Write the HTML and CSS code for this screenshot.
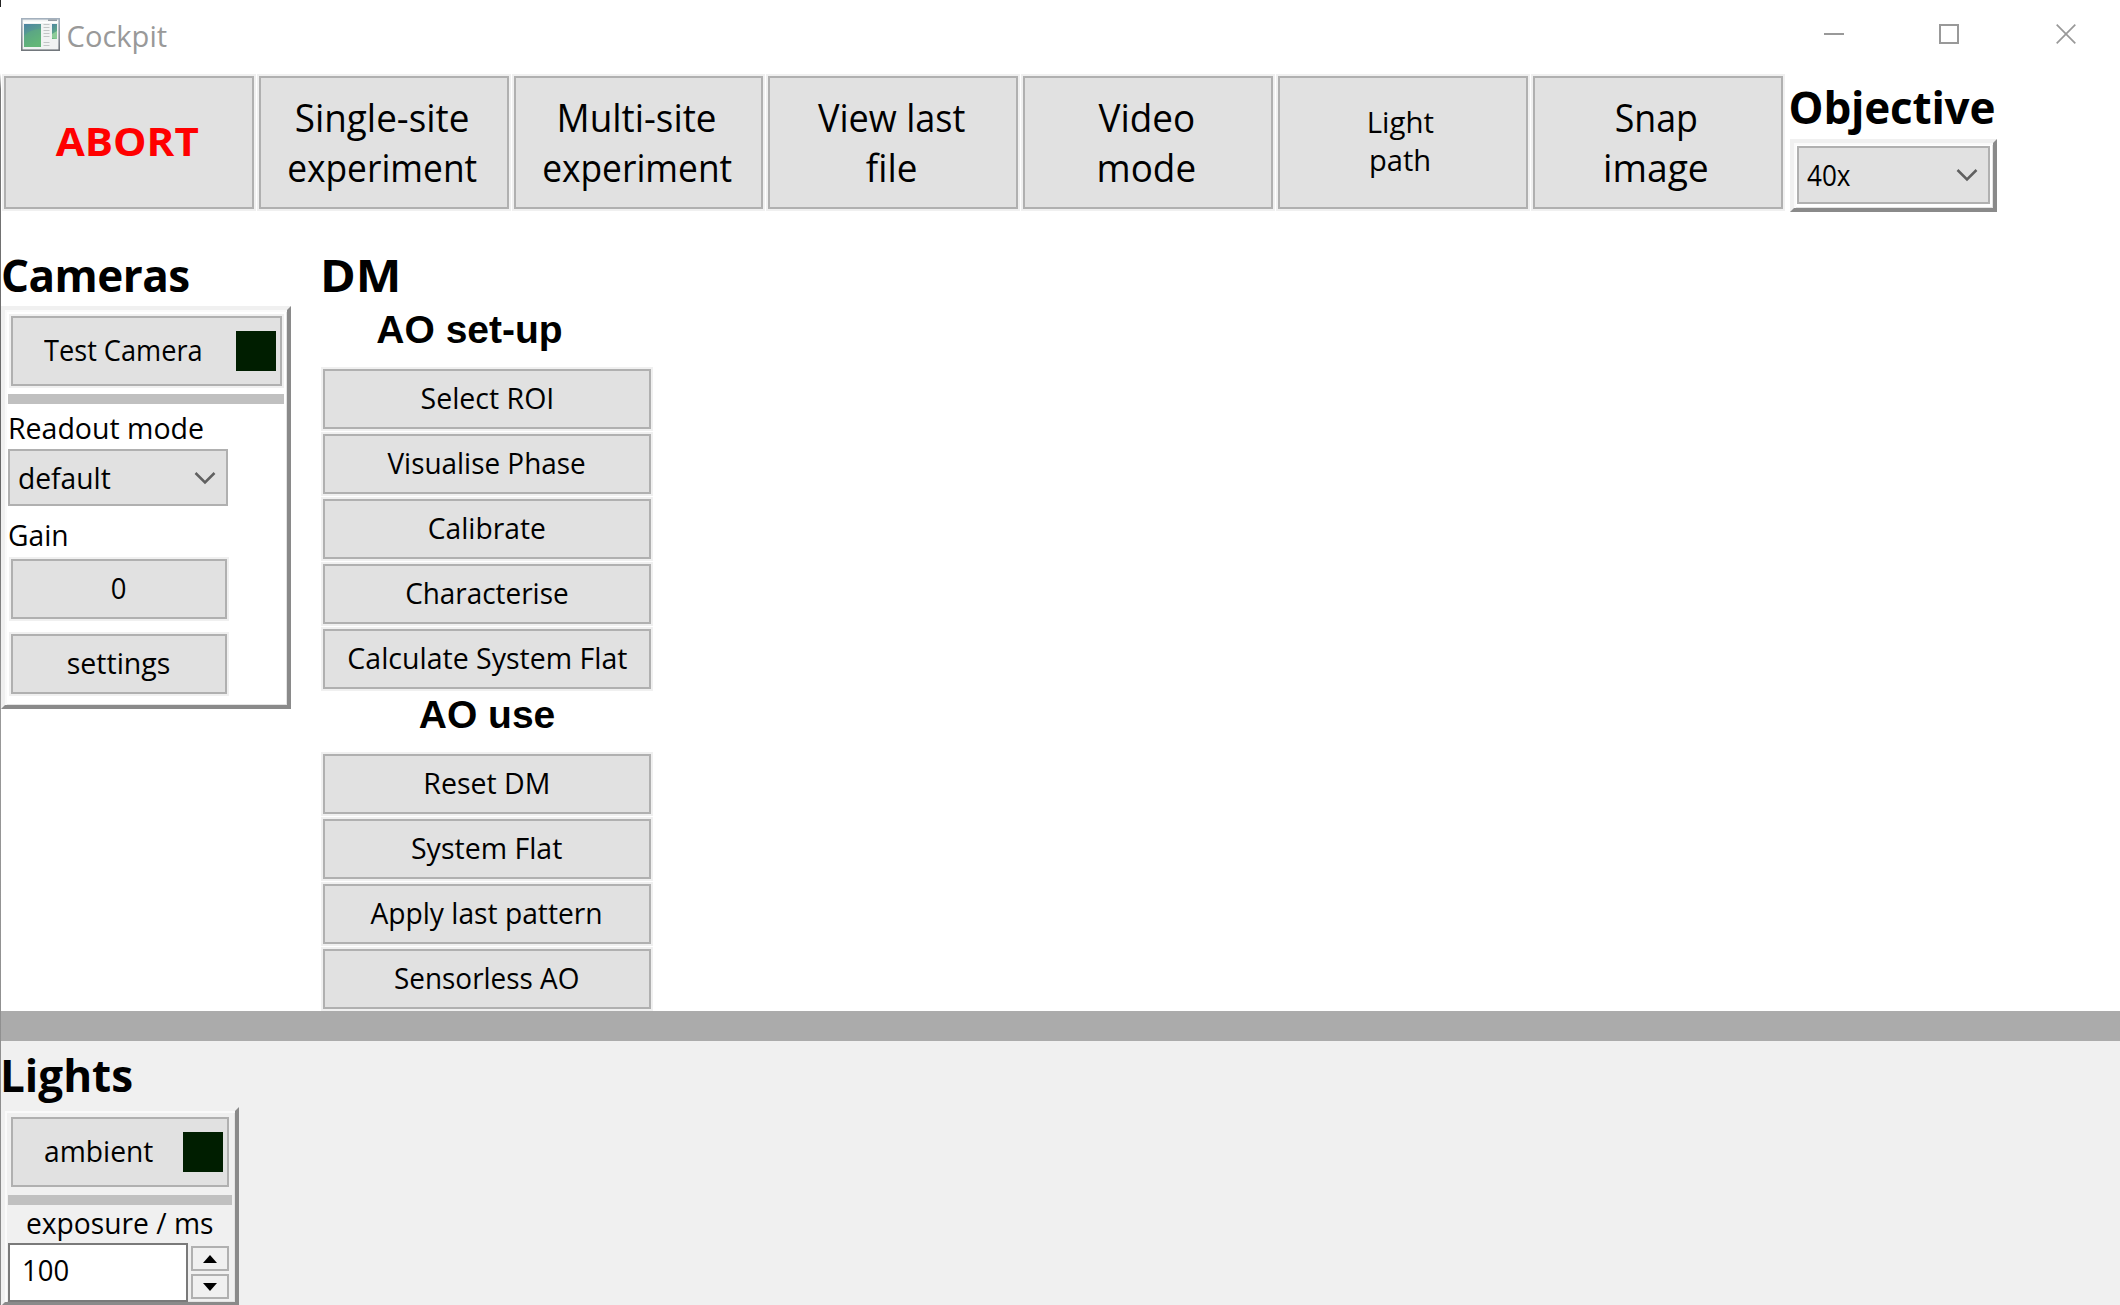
FILE: index.html
```
<!DOCTYPE html>
<html lang="en">
<head>
<meta charset="utf-8">
<title>Cockpit</title>
<link rel="stylesheet" href="styles.css">
</head>
<body>
<div class="window">
  <header class="titlebar">
    <svg class="app-icon" width="39" height="33" viewBox="0 0 39 33">
      <defs>
        <linearGradient id="pane" x1="0" y1="0" x2="0.4" y2="1"><stop offset="0" stop-color="#4d83a3"/><stop offset="1" stop-color="#66b97a"/></linearGradient>
        <linearGradient id="frame" x1="0" y1="0" x2="0" y2="1"><stop offset="0" stop-color="#a3b0bd"/><stop offset="1" stop-color="#72777c"/></linearGradient>
      </defs>
      <rect x="0.8" y="0.8" width="37.4" height="31.4" fill="#f1f3f3" stroke="url(#frame)" stroke-width="1.6"/>
      <path d="M27 2.2h9" stroke="#8b949c" stroke-width="1.4"/>
      <path d="M2 4.2h35" stroke="#fff" stroke-width="1.5"/>
      <rect x="3" y="6" width="17" height="23" fill="url(#pane)"/>
      <path d="M3 18Q9 11 20 11V29H3z" fill="#5fb476" opacity=".45"/>
      <path d="M22.500 6.500h6M22.500 9.500h6M22.500 12.500h6M22.500 15.500h6M22.500 18.500h6M22.500 24.500h6M22.500 27.500h6" stroke="#c2c6c6"/>
      <rect x="31" y="6" width="5" height="15" fill="url(#pane)"/>
      <path d="M31 16l5-3v8l-5-1z" fill="#8ccb98"/>
    </svg>
    <span class="t s97 title">Cockpit</span>
    <svg class="controls" width="252" height="20" viewBox="0 0 252 20" fill="none" stroke="#999" stroke-width="2">
      <path d="M0 10h20"/>
      <rect x="116" y="1" width="18" height="18"/>
      <path d="M232.700 .7l18.600 18.600M251.300 .7l-18.600 18.600" stroke-width="1.700"/>
    </svg>
  </header>

  <nav class="toolbar">
    <button class="btn tool abort"><span class="t s108">ABORT</span></button>
    <button class="btn tool"><span class="t s97">Single-site</span><span class="t s93">experiment</span></button>
    <button class="btn tool"><span class="t s97">Multi-site</span><span class="t s93">experiment</span></button>
    <button class="btn tool"><span class="t s95">View last</span><span class="t s97">file</span></button>
    <button class="btn tool"><span class="t s97">Video</span><span class="t s97">mode</span></button>
    <button class="btn tool compact"><span class="t s99">Light</span><span class="t s97">path</span></button>
    <button class="btn tool"><span class="t s94">Snap</span><span class="t s99">image</span></button>
    <div class="objective">
      <h2 class="heading">Objective</h2>
      <div class="raised">
        <div class="combo"><span class="t left s87">40x</span><svg class="chevron" width="22" height="14" viewBox="0 0 22 14"><path d="M1.500 2l9.500 9.500 9.500-9.500"/></svg></div>
      </div>
    </div>
  </nav>

  <main class="devices">
    <section class="cameras">
      <h2 class="heading">Cameras</h2>
      <div class="raised panel">
        <button class="btn device"><span class="t left s91">Test Camera</span><i class="lamp"></i></button>
        <div class="bar"></div>
        <div class="label readout"><span class="t left s95">Readout mode</span></div>
        <div class="combo"><span class="t left s94">default</span><svg class="chevron" width="22" height="14" viewBox="0 0 22 14"><path d="M1.500 2l9.500 9.500 9.500-9.500"/></svg></div>
        <div class="label gain"><span class="t left s94">Gain</span></div>
        <button class="btn small"><span class="t s92">0</span></button>
        <button class="btn small"><span class="t s95">settings</span></button>
      </div>
    </section>
    <section class="mirror">
      <h2 class="heading"><span class="t left s110">DM</span></h2>
      <h3 class="group first">AO set-up</h3>
      <div class="stack">
        <button class="btn"><span class="t s95">Select ROI</span></button>
        <button class="btn"><span class="t s93">Visualise Phase</span></button>
        <button class="btn"><span class="t s94">Calibrate</span></button>
        <button class="btn"><span class="t s93">Characterise</span></button>
        <button class="btn"><span class="t s95">Calculate System Flat</span></button>
      </div>
      <h3 class="group second">AO use</h3>
      <div class="stack">
        <button class="btn"><span class="t s95">Reset DM</span></button>
        <button class="btn"><span class="t s95">System Flat</span></button>
        <button class="btn"><span class="t s94">Apply last pattern</span></button>
        <button class="btn"><span class="t s93">Sensorless AO</span></button>
      </div>
    </section>
  </main>

  <div class="splitter"></div>

  <section class="lights">
    <h2 class="heading"><span class="t left">Lights</span></h2>
    <div class="raised panel light">
      <button class="btn device"><span class="t left s94">ambient</span><i class="lamp"></i></button>
      <div class="bar"></div>
      <div class="label exposure"><span class="t s94">exposure / ms</span></div>
      <div class="spin">
        <div class="field"><span class="t left s92">100</span></div>
        <div class="arrows">
          <button><svg width="14" height="8" viewBox="0 0 14 8"><path d="M7 0l7 8H0z"/></svg></button>
          <button><svg width="14" height="8" viewBox="0 0 14 8"><path d="M7 8L0 0h14z"/></svg></button>
        </div>
      </div>
    </div>
  </section>
</div>
</body>
</html>
```
FILE: styles.css
```
* { box-sizing: border-box; }
body {
  margin: 0;
  width: 2120px;
  height: 1305px;
  overflow: hidden;
  background: #fff;
  color: #000;
  font: 30px/40px "Open Sans", "Noto Sans", sans-serif;
}
.window {
  height: 1305px;
  display: flex;
  flex-direction: column;
  border-left: 1px solid;
  border-image: linear-gradient(#222 0 8px, #fff 8px 74px, #777 90px, #666 500px, #999 700px, #888) 1;
}

/* text is slightly condensed horizontally */
.t { display: inline-block; white-space: nowrap; }
.left { transform-origin: left; }
.s87 { transform: scaleX(.87); }
.s91 { transform: scaleX(.905); }
.s92 { transform: scaleX(.915); }
.s93 { transform: scaleX(.93); }
.s94 { transform: scaleX(.94); }
.s95 { transform: scaleX(.95); }
.s97 { transform: scaleX(.97); }
.s99 { transform: scaleX(.98); }
.s108 { transform: scaleX(1.08); }
.s110 { transform: scaleX(1.1); }

/* title bar */
.titlebar { height: 74px; flex: none; display: flex; align-items: flex-start; padding: 18px 44px 0 20px; }
.title { color: #999; margin: -2px 0 0 5px; }
.controls { margin: 6px 0 0 auto; }

/* shared controls */
.btn {
  font: inherit;
  color: inherit;
  height: 60px;
  padding: 0 0 3px;
  display: flex;
  align-items: center;
  justify-content: center;
  background: #e1e1e1;
  border: 2px solid #b0b0b0;
  box-shadow: 0 0 0 2px #f0f0f0;
}
.heading { margin: 0; font-size: 44px; line-height: 54px; font-weight: 700; }
.raised {
  border: 4px solid;
  border-color: #f0f0f0 #8a8a8a #8a8a8a #f0f0f0;
  box-shadow: inset 2px 2px #fafafa, inset -1px -1px #e4e4e4;
}
.combo {
  height: 57px;
  display: flex;
  align-items: center;
  justify-content: space-between;
  padding: 0 10px 0 8px;
  background: #e1e1e1;
  border: 2px solid #b0b0b0;
}
.chevron { fill: none; stroke: #606060; stroke-width: 2.5; }

/* toolbar */
.toolbar { flex: none; height: 176px; display: flex; padding: 2px 0 0 3px; }
.tool {
  width: 249.8px;
  height: 133px;
  margin-right: 5px;
  flex-direction: column;
  font-size: 38px;
  line-height: 50px;
  padding: 0 3px 2px 0;
}
.abort { color: #f00; font-size: 39px; font-weight: 700; padding-bottom: 4px; }
.compact { font-size: 30px; line-height: 38px; padding: 0 5px 3px 0; }
.objective { margin-left: 2px; width: 207px; }
.objective .heading { margin: 4px 0 0 -2px; padding-left: 1px; height: 59px; letter-spacing: -.2px; }
.objective .raised { height: 73px; padding: 3px 3px 4px; }
.objective .combo { height: 58px; }

/* devices */
.devices { flex: none; height: 761px; display: flex; gap: 32px; }
.devices .heading { margin-top: -2px; height: 58px; }
.cameras { width: 290px; }
.cameras .heading { letter-spacing: -.5px; }
.panel { height: 403px; padding: 6px 3px; }
.device { width: 271px; height: 70px; margin-left: 3px; padding: 0 4px 0 31px; justify-content: space-between; }
.device .t { position: relative; top: -1px; }
.lamp { width: 40px; height: 40px; background: #001e00; }
.bar { height: 10px; margin: 8px 0 5px; background: #c0c0c0; }
.readout { margin: -1px 0 1px; }
.cameras .combo { width: 220px; }
.small { width: 216px; margin: 0 0 15px 3px; }
.gain { margin: 9px 0 4px; }
.mirror { width: 328px; }
.mirror .heading { margin-left: -3px; }
.group { margin: 0; height: 63px; text-align: center; font: bold 39px/48px "Liberation Sans", Arial, sans-serif; }
.first { padding-right: 35px; }
.second { height: 65px; line-height: 51px; }
.stack { display: flex; flex-direction: column; gap: 5px; }

/* lights */
.splitter { flex: none; height: 30px; background: #ababab; }
.lights { flex: 1; background: #f0f0f0; }
.lights .heading { height: 66px; padding-top: 7px; margin-left: -1px; }
.light { width: 238px; height: 199px; }
.light .device { width: 218px; }
.exposure { text-align: center; margin-top: -4px; height: 37px; line-height: 34px; }
.spin { display: flex; gap: 3px; }
.field { width: 180px; height: 59px; padding: 5px 12px; background: #fff; border: 2px solid #7a7a7a; }
.arrows { width: 38px; display: flex; flex-direction: column; gap: 3px; padding-top: 3px; }
.arrows button { height: 25px; padding: 0; border: 2px solid #b0b0b0; background: #f0f0f0; display: flex; align-items: center; justify-content: center; }
```
